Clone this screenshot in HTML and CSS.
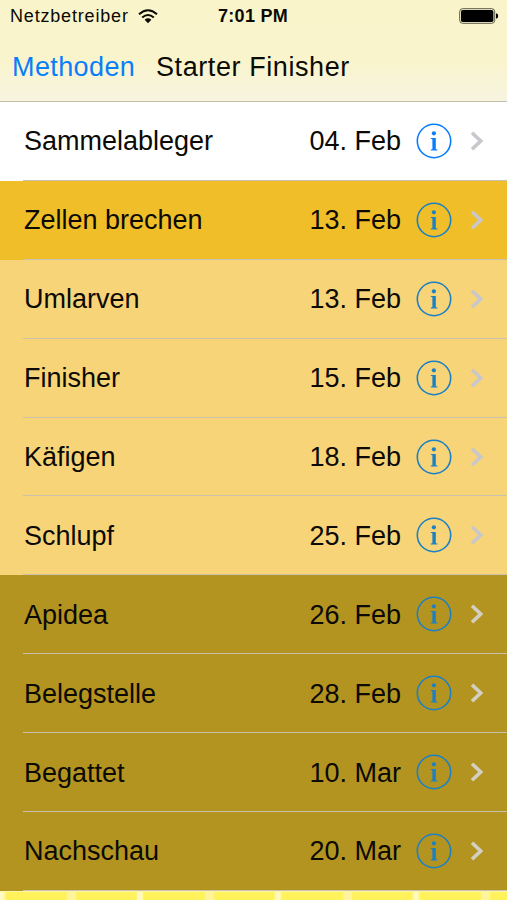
FILE: index.html
```
<!DOCTYPE html>
<html lang="de">
<head>
<meta charset="utf-8">
<title>Starter Finisher</title>
<link rel="stylesheet" href="styles.css">
</head>
<body>
<svg class="defs" width="0" height="0" aria-hidden="true">
  <symbol id="info" viewBox="0 0 36 36">
    <circle cx="18" cy="18" r="16.7" fill="none" stroke="currentColor" stroke-width="1.6"/>
    <circle cx="17.9" cy="10.3" r="2.1" fill="currentColor"/>
    <path d="M14.8 14.9H19.8V26.2L21.4 26.6V27.5H14.8V26.6L16.4 26.2V16.2L14.8 15.8Z" fill="currentColor"/>
  </symbol>
  <symbol id="chevron" viewBox="0 0 14 20">
    <path d="M2 1.8L10.7 10L2 18.2" fill="none" stroke="currentColor" stroke-width="3.6"/>
  </symbol>
</svg>
<header class="top">
  <div class="status">
    <span class="carrier">Netzbetreiber</span>
    <svg class="wifi" viewBox="0 0 20 15"><g fill="none" stroke="#0b0a04" stroke-width="2"><path d="M1 5.3Q10-2.7 19 5.3"/><path d="M4.2 8.6Q10 3.4 15.8 8.6"/></g><path d="M6.6 10.7Q10 7.8 13.4 10.7L10 14.2Z" fill="#0b0a04"/></svg>
    <span class="clock">7:01 PM</span>
    <svg class="battery" viewBox="0 0 40 16"><rect x=".7" y=".7" width="35" height="14.6" rx="3" fill="none" stroke="#5c5a48" stroke-width="1"/><rect x="2" y="2" width="32.4" height="12" rx="1.7"/><path d="M37 5.2Q39.2 5.5 39.2 8T37 10.8Z"/></svg>
  </div>
  <nav class="nav"><a class="back">Methoden</a><h1 class="title">Starter Finisher</h1></nav>
</header>
<ul class="list">
  <li class="row white"><span class="name">Sammelableger</span><span class="date">04. Feb</span><svg class="info"><use href="#info"/></svg><svg class="chevron"><use href="#chevron"/></svg></li>
  <li class="row amber"><span class="name">Zellen brechen</span><span class="date">13. Feb</span><svg class="info"><use href="#info"/></svg><svg class="chevron"><use href="#chevron"/></svg></li>
  <li class="row sand"><span class="name">Umlarven</span><span class="date">13. Feb</span><svg class="info"><use href="#info"/></svg><svg class="chevron"><use href="#chevron"/></svg></li>
  <li class="row sand"><span class="name">Finisher</span><span class="date">15. Feb</span><svg class="info"><use href="#info"/></svg><svg class="chevron"><use href="#chevron"/></svg></li>
  <li class="row sand"><span class="name">Käfigen</span><span class="date">18. Feb</span><svg class="info"><use href="#info"/></svg><svg class="chevron"><use href="#chevron"/></svg></li>
  <li class="row sand"><span class="name">Schlupf</span><span class="date">25. Feb</span><svg class="info"><use href="#info"/></svg><svg class="chevron"><use href="#chevron"/></svg></li>
  <li class="row olive"><span class="name">Apidea</span><span class="date">26. Feb</span><svg class="info"><use href="#info"/></svg><svg class="chevron"><use href="#chevron"/></svg></li>
  <li class="row olive"><span class="name">Belegstelle</span><span class="date">28. Feb</span><svg class="info"><use href="#info"/></svg><svg class="chevron"><use href="#chevron"/></svg></li>
  <li class="row olive"><span class="name">Begattet</span><span class="date">10. Mar</span><svg class="info"><use href="#info"/></svg><svg class="chevron"><use href="#chevron"/></svg></li>
  <li class="row olive"><span class="name">Nachschau</span><span class="date">20. Mar</span><svg class="info"><use href="#info"/></svg><svg class="chevron"><use href="#chevron"/></svg></li>
</ul>
<div class="comb"></div>
</body>
</html>
```
FILE: styles.css
```
* { box-sizing: border-box; }
body { margin: 0; width: 507px; height: 900px; overflow: hidden; display: flex; flex-direction: column; font-family: "Liberation Sans", Arial, sans-serif; color: #0b0a04; background: #fff05a; }
.defs { position: absolute; }
.top { flex: none; height: 102px; border-bottom: 1px solid #c3c0aa; background: linear-gradient(#faf4cb, #faf4cd 60%, #f6f4df); }
.status { height: 32px; display: flex; align-items: center; padding: 0 8px 0 10px; font-size: 18px; }
.carrier { width: 120px; padding-top: 1px; letter-spacing: 0.82px; white-space: nowrap; }
.wifi { width: 20px; height: 15px; margin-left: 8px; }
.clock { margin-left: 60px; padding-top: 1px; font-weight: bold; font-size: 18px; letter-spacing: 0.3px; white-space: nowrap; }
.battery { width: 40px; height: 16px; margin-left: auto; }
.nav { display: flex; align-items: center; height: 69px; padding: 1px 0 0 12px; font-size: 27px; }
.back { width: 144px; color: #087efb; letter-spacing: 0.4px; white-space: nowrap; }
.title { margin: 0; font-size: 27px; font-weight: normal; letter-spacing: 0.58px; white-space: nowrap; }
.list { list-style: none; margin: 0; padding: 0; flex: none; }
.row { height: 78.9px; padding: 0 23px 0 24px; display: flex; align-items: center; font-size: 27px; border-bottom: 1px solid; border-image: linear-gradient(90deg, transparent 24px, #c8c1ad 24px) 1; }
.name { flex: 1; padding-top: 2px; }
.date { width: 93px; padding-top: 2px; margin-right: 15px; white-space: nowrap; text-align: right; }
.info { width: 36px; height: 36px; color: #087efb; }
.chevron { width: 14px; height: 20px; margin-left: 18px; color: #c7c7cc; }
.white { background: #fff; }
.amber { background: #f0be28; }
.sand { background: #f7d478; }
.olive { background: #b49420; }
.amber .info, .sand .info, .olive .info { color: #1c80c4; }
.olive .chevron { color: #d3cfc3; }
.comb { flex: 1; border-top: 1px solid #fff7a4; background: repeating-linear-gradient(90deg, #fffabf 0 4px, #fff25a 6px 66px, #fff49a 68px 75px, #fff25a 77px 136px, #fffabf 138px); }
```
